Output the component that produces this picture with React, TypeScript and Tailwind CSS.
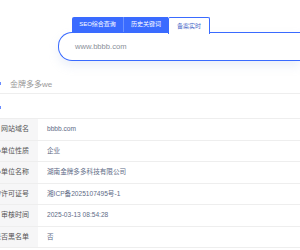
import React from "react";

const rows: [string, string][] = [
  ["网站域名", "bbbb.com"],
  ["主办单位性质", "企业"],
  ["主办单位名称", "湖南金牌多多科技有限公司"],
  ["网站备案/许可证号", "湘ICP备2025107495号-1"],
  ["审核时间", "2025-03-13 08:54:28"],
  ["是否黑名单", "否"],
];

const font = { fontFamily: '"Liberation Sans", "Noto Sans CJK SC", sans-serif' };

export default function App() {
  return (
    <div className="w-[300px] h-[250px] overflow-hidden bg-white relative" style={font}>
      <div className="pt-[17px] pl-[58px]">
        <div className="flex pl-[14px] h-[15px] items-stretch relative z-10">
          <div className="w-[52px] bg-[#3a6bff] text-white text-[6px] flex items-center justify-center rounded-tl-[2px] border-r border-[#6b91ff]">SEO综合查询</div>
          <div className="w-[44px] bg-[#3a6bff] text-white text-[6px] flex items-center justify-center">历史关键词</div>
          <div className="w-[42px] h-[17px] bg-white text-[#4a68c8] text-[6px] flex items-center justify-center border-[1.5px] border-b-0 border-[#3a6bff] rounded-t-[2px]">备案实时</div>
        </div>
        <div className="h-[29px] -mt-[0px] border-[1.5px] border-r-0 border-[#3a6bff] rounded-l-[14px] flex items-center pl-[16px] shadow-[0_5px_10px_rgba(180,195,230,0.25)]">
          <span className="text-[7.6px] text-[#8a8f99]">www.bbbb.com</span>
        </div>
      </div>
      <div className="mt-[15px] h-[18px] border-b border-[#eeeeee] flex items-center relative">
        <span className="absolute left-0 top-[6px] w-[1px] h-[3px] bg-[#6a8cff]"></span>
        <span className="pl-[10px] text-[8px] text-[#999]">金牌多多we</span>
      </div>
      <div className="h-[25px] border-b border-[#eeeeee] relative">
        <span className="absolute left-0 top-[12px] w-[1px] h-[3px] bg-[#6a8cff]"></span>
      </div>
      {rows.map(([k, v]) => (
        <div key={k} className="flex h-[21.5px] border-b border-[#eeeeee]">
          <div className="w-[38px] shrink-0 bg-[#f6f6f7] flex items-center justify-end pr-[9px] overflow-hidden whitespace-nowrap">
            <span className="text-[7px] text-[#555]">{k}</span>
          </div>
          <div className="flex-1 flex items-center pl-[9px] text-[6.6px] text-[#5e6b86] whitespace-nowrap">{v}</div>
        </div>
      ))}
    </div>
  );
}
